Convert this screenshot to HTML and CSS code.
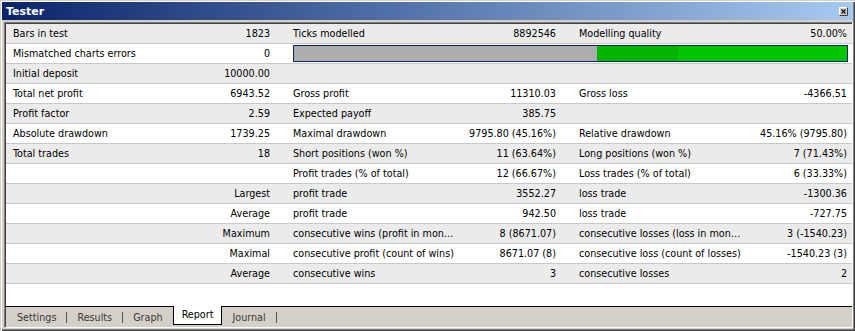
FILE: index.html
```html
<!DOCTYPE html>
<html lang="en">
<head>
  <meta charset="UTF-8" />
  <title>Tester</title>
  <link rel="stylesheet" href="styles.css">
</head>
<body>
  <div class="window">
    <div class="titlebar">
      <span class="title">Tester</span>
      <svg class="close-btn" width="9" height="9" viewBox="0 0 9 9">
        <rect x="0" y="0" width="9" height="9" fill="#d4d0c8" />
        <path d="M0.5 8.5V0.5H8.5" stroke="#ffffff" fill="none" />
        <path d="M0.5 8.5H8.5V0.5" stroke="#404040" fill="none" />
        <path d="M2.5 2.5L6.5 6.5M6.5 2.5L2.5 6.5" stroke="#000000" stroke-width="1.1" />
      </svg>
    </div>

    <div class="panel">
      <div class="panel-inner">
        <div class="report">
          <div class="row alt">
            <span class="label">Bars in test</span><span class="value">1823</span>
            <span class="label">Ticks modelled</span><span class="value">8892546</span>
            <span class="label">Modelling quality</span><span class="value last">50.00%</span>
          </div>
          <div class="row">
            <span class="label">Mismatched charts errors</span><span class="value">0</span>
            <div class="quality-bar">
              <span class="bar-grey"></span>
              <span class="bar-dark"></span>
              <span class="bar-green"></span>
            </div>
          </div>
          <div class="row alt">
            <span class="label">Initial deposit</span><span class="value">10000.00</span>
            <span class="label"></span><span class="value"></span>
            <span class="label"></span><span class="value last"></span>
          </div>
          <div class="row">
            <span class="label">Total net profit</span><span class="value">6943.52</span>
            <span class="label">Gross profit</span><span class="value">11310.03</span>
            <span class="label">Gross loss</span><span class="value last">-4366.51</span>
          </div>
          <div class="row alt">
            <span class="label">Profit factor</span><span class="value">2.59</span>
            <span class="label">Expected payoff</span><span class="value">385.75</span>
            <span class="label"></span><span class="value last"></span>
          </div>
          <div class="row">
            <span class="label">Absolute drawdown</span><span class="value">1739.25</span>
            <span class="label">Maximal drawdown</span><span class="value">9795.80 (45.16%)</span>
            <span class="label">Relative drawdown</span><span class="value last">45.16% (9795.80)</span>
          </div>
          <div class="row alt">
            <span class="label">Total trades</span><span class="value">18</span>
            <span class="label">Short positions (won %)</span><span class="value">11 (63.64%)</span>
            <span class="label">Long positions (won %)</span><span class="value last">7 (71.43%)</span>
          </div>
          <div class="row">
            <span class="label"></span><span class="value"></span>
            <span class="label">Profit trades (% of total)</span><span class="value">12 (66.67%)</span>
            <span class="label">Loss trades (% of total)</span><span class="value last">6 (33.33%)</span>
          </div>
          <div class="row alt">
            <span class="label"></span><span class="value">Largest</span>
            <span class="label">profit trade</span><span class="value">3552.27</span>
            <span class="label">loss trade</span><span class="value last">-1300.36</span>
          </div>
          <div class="row">
            <span class="label"></span><span class="value">Average</span>
            <span class="label">profit trade</span><span class="value">942.50</span>
            <span class="label">loss trade</span><span class="value last">-727.75</span>
          </div>
          <div class="row alt">
            <span class="label"></span><span class="value">Maximum</span>
            <span class="label">consecutive wins (profit in mon…</span><span class="value">8 (8671.07)</span>
            <span class="label">consecutive losses (loss in mon…</span><span class="value last">3 (-1540.23)</span>
          </div>
          <div class="row">
            <span class="label"></span><span class="value">Maximal</span>
            <span class="label">consecutive profit (count of wins)</span><span class="value">8671.07 (8)</span>
            <span class="label">consecutive loss (count of losses)</span><span class="value last">-1540.23 (3)</span>
          </div>
          <div class="row alt">
            <span class="label"></span><span class="value">Average</span>
            <span class="label">consecutive wins</span><span class="value">3</span>
            <span class="label">consecutive losses</span><span class="value last">2</span>
          </div>
        </div>

        <div class="tabs">
          <span class="tab">Settings</span><span class="sep"></span>
          <span class="tab">Results</span><span class="sep"></span>
          <span class="tab">Graph</span>
          <span class="tab active">Report</span>
          <span class="tab">Journal</span><span class="sep"></span>
        </div>
      </div>
    </div>
  </div>
</body>
</html>
```

FILE: styles.css
```css
:root {
  --face: #d4d0c8;
  --shadow: #808080;
  --dark: #404040;
  --row-alt: #ebebeb;
  --row-line: #c8c8c8;
  --font-family: "DejaVu Sans Condensed", "Liberation Sans", sans-serif;
}

* {
  margin: 0;
  padding: 0;
  box-sizing: border-box;
}

body {
  background: var(--face);
  font-family: var(--font-family);
  font-size: 10.7px;
  color: #000;
}

.window {
  width: 855px;
  height: 331px;
  padding: 2px 2px 3px 2px;
  background: var(--face);
  box-shadow: inset 1px 1px var(--face), inset 2px 2px #fff,
    inset -1px -1px var(--dark), inset -2px -2px var(--shadow);
  display: flex;
  flex-direction: column;
}

/* title bar */
.titlebar {
  height: 18px;
  background: linear-gradient(to right, #0a246a, #a6caf0);
  display: flex;
  align-items: center;
  justify-content: space-between;
  padding: 0 5px 0 4px;
}

.title {
  font-family: "DejaVu Sans", "Liberation Sans", sans-serif;
  font-weight: bold;
  font-size: 11px;
  color: #fff;
}

.close-btn {
  display: block;
}

/* sunken report panel */
.panel {
  flex: 1;
  margin-top: 2px;
  margin-left: 2px;
  border-top: 1px solid var(--shadow);
  border-left: 1px solid var(--shadow);
  border-right: 1px solid #fff;
  border-bottom: 1px solid #fff;
  display: flex;
}

.panel-inner {
  flex: 1;
  border-top: 1px solid var(--dark);
  border-left: 1px solid var(--dark);
  background: #fff;
  display: flex;
  flex-direction: column;
}

.report {
  flex: 1;
}

.row {
  display: grid;
  grid-template-columns: 134px 146px 175px 111px 175px 1fr;
  height: 20px;
  border-bottom: 1px solid var(--row-line);
  background: #fff;
}

.row.alt {
  background: var(--row-alt);
}

.label,
.value {
  white-space: nowrap;
  overflow: hidden;
  padding-top: 1px;
  line-height: 18px;
}

.label {
  padding-left: 7px;
}

.value {
  text-align: right;
  padding-right: 16px;
}

.value.last {
  padding-right: 5px;
}

/* modelling quality bar */
.quality-bar {
  grid-column: 3 / 7;
  margin: 1px 4px 1px 7px;
  border: 1px solid #0a246a;
  display: flex;
}

.bar-grey {
  width: 303px;
  background: #adadad;
}

.bar-dark {
  width: 81px;
  background: #00b400;
}

.bar-green {
  flex: 1;
  background: #00c600;
}

/* bottom tabs */
.tabs {
  height: 21px;
  border-top: 1px solid #000;
  background: var(--face);
  display: flex;
  align-items: flex-start;
  padding-left: 1px;
}

.tab {
  padding: 1px 10px 0 10px;
  line-height: 19px;
  color: #3a3a3a;
}

.tab.active {
  margin-top: -1px;
  height: 19px;
  line-height: 18px;
  padding: 0 8px;
  background: #fff;
  color: #000;
  border-left: 1px solid #000;
  border-right: 1px solid #000;
  border-bottom: 1px solid #000;
}

.sep {
  width: 1px;
  height: 11px;
  margin-top: 5px;
  background: #555;
}
```
